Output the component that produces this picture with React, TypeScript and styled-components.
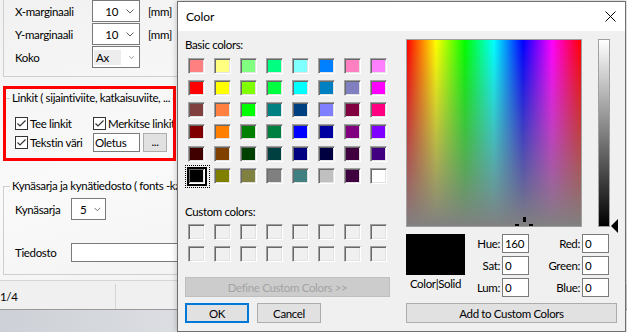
import React from 'react';
import styled, { createGlobalStyle } from 'styled-components';

const Global = createGlobalStyle`
  html, body { margin: 0; padding: 0; }
  body {
    width: 627px; height: 332px; overflow: hidden;
    font-family: Lato, "Liberation Sans", sans-serif; font-size: 11.5px; letter-spacing: -0.35px; color: #000;
    background: #f0f0f0;
  }
  * { box-sizing: border-box; }
`;

const Screen = styled.div`
  position: relative; width: 627px; height: 332px; overflow: hidden;
  display: flex; flex-direction: column;
`;

const AppWindow = styled.div`
  flex: 0 0 310px; display: flex; flex-direction: column;
  border-bottom: 1px solid #9a9a9a;
`;

const Content = styled.div`
  flex: 0 0 280px; display: flex; flex-direction: column;
  background: linear-gradient(165deg, #f1f1f1 0%, #fafafa 45%, #f3f3f3 75%, #ededed 100%);
`;

const TopGroup = styled.div`
  height: 77px; margin-left: 3px; width: 400px;
  border-left: 1px solid #cfcfcf; border-bottom: 1px solid #cfcfcf;
  padding-left: 11px; display: flex; flex-direction: column; gap: 1px;
`;

const FormRow = styled.div<{ $h?: number }>`
  height: ${p => p.$h ?? 22}px; display: flex; align-items: center;
`;

const FieldLabel = styled.span<{ $w: number }>`
  width: ${p => p.$w}px; flex: 0 0 auto; white-space: nowrap;
`;

const Combo = styled.div<{ $w: number; $pl: number; $pr: number }>`
  width: ${p => p.$w}px; height: 22px; background: #fff; border: 1px solid #7a7a7a;
  display: flex; align-items: center; padding: 0 ${p => p.$pr}px 0 ${p => p.$pl}px; gap: 8px;
`;

const ComboValue = styled.span<{ $right?: boolean; $hl?: boolean }>`
  flex: ${p => (p.$right ? 1 : '0 0 auto')}; text-align: ${p => (p.$right ? 'right' : 'left')};
  ${p => (p.$hl ? 'background:#ededed; padding: 1px 12px 1px 2px; flex:1;' : '')}
`;

const Unit = styled.span`
  margin-left: 8px;
`;

const Highlight = styled.div`
  margin: 9px 0 0 3px; width: 173px; height: 75px;
  border: 3px solid #ff0000; overflow: hidden;
`;

const GroupBox = styled.fieldset<{ $left?: boolean; $bottom?: boolean }>`
  margin: 0; min-width: 0; padding: 0;
  border: none; border-top: 1px solid #cfcfcf;
  ${p => (p.$left ? 'border-left: 1px solid #cfcfcf;' : '')}
  ${p => (p.$bottom ? 'border-bottom: 1px solid #cfcfcf;' : '')}
`;

const Legend = styled.legend<{ $ml: number }>`
  padding: 0 2px; margin-left: ${p => p.$ml}px; line-height: 14px; white-space: nowrap;
`;

const LinksGroup = styled(GroupBox)`
  margin-top: 2px; width: 300px;
`;

const CheckGrid = styled.div`
  display: grid; grid-template-columns: 78px auto; grid-template-rows: 18px 19px;
  row-gap: 1px; padding: 9px 0 0 9px; align-items: center;
`;

const CheckItem = styled.label`
  display: flex; align-items: center; gap: 2px; white-space: nowrap;
`;

const CheckBox = styled.span`
  width: 13px; height: 13px; border: 1px solid #333; background: #fff;
  display: inline-flex; align-items: center; justify-content: center; flex: 0 0 auto;
`;

const ColorPick = styled.div`
  display: flex; gap: 3px; align-items: center;
`;

const TextBox = styled.div<{ $w: number; $h?: number }>`
  width: ${p => p.$w}px; height: ${p => p.$h ?? 19}px; background: #fff; border: 1px solid #7a7a7a;
  display: flex; align-items: center; padding-left: 1px; white-space: nowrap;
`;

const SmallButton = styled.div`
  width: 24px; height: 19px; background: #e1e1e1; border: 1px solid #adadad;
  display: flex; align-items: center; justify-content: center; padding-bottom: 2px;
`;

const PenGroup = styled(GroupBox)`
  margin: 18px 0 0 3px; width: 400px;
`;

const PenBody = styled.div`
  display: flex; flex-direction: column; gap: 23px; padding: 5px 0 12px 11px;
`;

const StatusBar = styled.div`
  flex: 1; background: #f0f0f0; border-top: 1px solid #d5d5d5; display: flex;
`;

const StatusCell = styled.div<{ $w?: number }>`
  width: ${p => (p.$w ? `${p.$w}px` : 'auto')}; flex: ${p => (p.$w ? '0 0 auto' : 1)};
  display: flex; align-items: center; padding-bottom: 1px;
  border-right: 1px solid #d5d5d5; margin: 3px 0 0;
`;

const Desktop = styled.div`
  flex: 1;
  background: linear-gradient(90deg, #cdd0d6 0%, #dfe1e5 35%, #eeeff1 70%, #f6f6f7 100%);
`;

/* ---------- Color dialog ---------- */

const Dialog = styled.div`
  position: absolute; left: 177px; top: 1px; width: 449px; height: 331px;
  border: 1px solid #707070; background: #f0f0f0;
  display: flex; flex-direction: column;
  box-shadow: 0 0 6px rgba(0, 0, 0, 0.25);
`;

const TitleBar = styled.div`
  height: 29px; background: #fff; display: flex; align-items: center;
  justify-content: space-between; padding-left: 8px; flex: 0 0 auto;
`;

const Title = styled.span`
  font-size: 12px; letter-spacing: -0.1px;
`;

const CloseBox = styled.div`
  width: 30px; height: 29px; display: flex; align-items: center; justify-content: center;
`;

const DialogBody = styled.div`
  display: flex; padding-left: 7px; gap: 16px;
`;

const LeftCol = styled.div`
  width: 205px; display: flex; flex-direction: column; padding-top: 7px;
`;

const SectionLabel = styled.div<{ $mt?: number }>`
  height: 14px; line-height: 14px; margin-top: ${p => p.$mt ?? 0}px;
`;

const SwatchGrid = styled.div<{ $mt: number }>`
  display: grid; grid-template-columns: repeat(8, 17px); grid-auto-rows: 16px;
  column-gap: 9px; row-gap: 6px; margin: ${p => p.$mt}px 0 0 3px;
`;

const Swatch = styled.div<{ $c: string; $sel?: boolean }>`
  position: relative; width: 17px; height: 16px; background: ${p => p.$c};
  border: 1px solid; border-color: #a0a0a0 #ffffff #ffffff #a0a0a0;
  box-shadow: inset 1px 1px 0 #696969, inset -1px -1px 0 #e3e3e3;
  ${p =>
    p.$sel
      ? `
    &::before { content: ''; position: absolute; inset: -2px -3px -3px -2px; border: 2px solid #000; }
    &::after { content: ''; position: absolute; inset: -4px -6px -5px -4px; border: 1px dotted #000; }
  `
      : ''}
`;

const Button = styled.div<{ $w: number; $primary?: boolean; $disabled?: boolean }>`
  width: ${p => p.$w}px; height: 20px; display: flex; align-items: center; justify-content: center;
  background: ${p => (p.$disabled ? '#cccccc' : '#e1e1e1')};
  color: ${p => (p.$disabled ? '#a3a3a3' : '#000')};
  border: ${p => (p.$primary ? '2px solid #0078d7' : p.$disabled ? '1px solid #bfbfbf' : '1px solid #adadad')};
  white-space: nowrap;
`;

const DefineButton = styled(Button)`
  margin-top: 15px;
`;

const ButtonRow = styled.div`
  display: flex; gap: 8px; margin-top: 6px;
`;

const RightCol = styled.div`
  width: 213px; display: flex; flex-direction: column; padding-top: 8px;
`;

const PickerRow = styled.div`
  display: flex; gap: 16px; height: 188px;
`;

const Spectrum = styled.div`
  position: relative; width: 176px; height: 188px; border: 1px solid #a0a0a0; overflow: hidden;
  background:
    linear-gradient(to bottom, rgba(128, 128, 128, 0) 0%, #808080 100%),
    linear-gradient(to right, #ff0000 0%, #ffff00 16.67%, #00ff00 33.33%, #00ffff 50%, #0000ff 66.67%, #ff00ff 83.33%, #ff0000 100%);
`;

const Crosshair = styled.svg`
  position: absolute; left: 107px; top: 176px;
`;

const LumWrap = styled.div`
  position: relative; width: 12px; height: 188px;
`;

const LumBar = styled.div`
  width: 12px; height: 188px; border: 1px solid #a0a0a0;
  background: linear-gradient(to bottom, #ffffff 0%, #808080 50%, #000000 100%);
`;

const LumArrow = styled.svg`
  position: absolute; left: 13px; top: 180px;
`;

const ValueRow = styled.div`
  display: flex; margin-top: 7px;
`;

const PreviewCol = styled.div`
  width: 61px; display: flex; flex-direction: column; align-items: center;
`;

const Preview = styled.div`
  width: 59px; height: 41px; background: #000; align-self: flex-start;
`;

const PreviewLabel = styled.div`
  margin-top: 2px; line-height: 14px; margin-left: -2px;
`;

const FieldsGrid = styled.div`
  display: grid; grid-template-columns: 33px 27px 49px 27px; grid-auto-rows: 19px;
  column-gap: 2px; row-gap: 3px; align-items: center;
`;

const ValueLabel = styled.span`
  text-align: right;
`;

const ValueInput = styled.div`
  height: 19px; background: #fff; border: 1px solid #7a7a7a; padding-left: 2px;
  display: flex; align-items: center;
`;

const AddButton = styled(Button)`
  margin-top: 6px;
`;

const basic = [
  ['#FF8080', '#FFFF80', '#80FF80', '#00FF80', '#80FFFF', '#0080FF', '#FF80C0', '#FF80FF'],
  ['#FF0000', '#FFFF00', '#80FF00', '#00FF40', '#00FFFF', '#0080C0', '#8080C0', '#FF00FF'],
  ['#804040', '#FF8040', '#00FF00', '#008080', '#004080', '#8080FF', '#800040', '#FF0080'],
  ['#800000', '#FF8000', '#008000', '#008040', '#0000FF', '#0000A0', '#800080', '#8000FF'],
  ['#400000', '#804000', '#004000', '#004040', '#000080', '#000040', '#400040', '#400080'],
  ['#000000', '#808000', '#808040', '#808080', '#408080', '#C0C0C0', '#400040', '#FFFFFF'],
];

const Chevron = () => (
  <svg width="8" height="5" viewBox="0 0 8 5">
    <polyline points="0.5,0.5 4,4 7.5,0.5" fill="none" stroke="#606060" strokeWidth="1" />
  </svg>
);

const Check = () => (
  <svg width="11" height="11" viewBox="0 0 11 11">
    <polyline points="1.5,5.5 4,8 9.5,2.5" fill="none" stroke="#333" strokeWidth="1.2" />
  </svg>
);

const CheckField = ({ label }: { label: string }) => (
  <CheckItem>
    <CheckBox>
      <Check />
    </CheckBox>
    {label}
  </CheckItem>
);

export default function App() {
  return (
    <>
      <Global />
      <Screen>
        <AppWindow>
          <Content>
            <TopGroup>
              <FormRow>
                <FieldLabel $w={77}>X-marginaali</FieldLabel>
                <Combo $w={48} $pl={3} $pr={5}>
                  <ComboValue $right>10</ComboValue>
                  <Chevron />
                </Combo>
                <Unit>[mm]</Unit>
              </FormRow>
              <FormRow>
                <FieldLabel $w={77}>Y-marginaali</FieldLabel>
                <Combo $w={48} $pl={3} $pr={5}>
                  <ComboValue $right>10</ComboValue>
                  <Chevron />
                </Combo>
                <Unit>[mm]</Unit>
              </FormRow>
              <FormRow>
                <FieldLabel $w={77}>Koko</FieldLabel>
                <Combo $w={48} $pl={1} $pr={5}>
                  <ComboValue $hl>Ax</ComboValue>
                  <Chevron />
                </Combo>
              </FormRow>
            </TopGroup>

            <Highlight>
              <LinksGroup>
                <Legend $ml={4}>Linkit ( sijaintiviite, katkaisuviite, ...</Legend>
                <CheckGrid>
                  <CheckField label="Tee linkit" />
                  <CheckField label="Merkitse linkit" />
                  <CheckField label="Tekstin väri" />
                  <ColorPick>
                    <TextBox $w={47}>Oletus</TextBox>
                    <SmallButton>...</SmallButton>
                  </ColorPick>
                </CheckGrid>
              </LinksGroup>
            </Highlight>

            <PenGroup $left $bottom>
              <Legend $ml={6}>Kynäsarja ja kynätiedosto ( fonts -kansio )</Legend>
              <PenBody>
                <FormRow>
                  <FieldLabel $w={56}>Kynäsarja</FieldLabel>
                  <Combo $w={35} $pl={8} $pr={4}>
                    <ComboValue>5</ComboValue>
                    <Chevron />
                  </Combo>
                </FormRow>
                <FormRow $h={19}>
                  <FieldLabel $w={56}>Tiedosto</FieldLabel>
                  <TextBox $w={250} />
                </FormRow>
              </PenBody>
            </PenGroup>
          </Content>
          <StatusBar>
            <StatusCell $w={116}>1/4</StatusCell>
            <StatusCell />
          </StatusBar>
        </AppWindow>
        <Desktop />

        <Dialog>
          <TitleBar>
            <Title>Color</Title>
            <CloseBox>
              <svg width="11" height="11" viewBox="0 0 11 11">
                <path d="M0.5 0.5 L10.5 10.5 M10.5 0.5 L0.5 10.5" stroke="#000" strokeWidth="1" />
              </svg>
            </CloseBox>
          </TitleBar>
          <DialogBody>
            <LeftCol>
              <SectionLabel>Basic colors:</SectionLabel>
              <SwatchGrid $mt={6}>
                {basic.flatMap((row, r) =>
                  row.map((c, i) => <Swatch key={`${r}-${i}`} $c={c} $sel={r === 5 && i === 0} />)
                )}
              </SwatchGrid>
              <SectionLabel $mt={21}>Custom colors:</SectionLabel>
              <SwatchGrid $mt={5}>
                {Array.from({ length: 16 }, (_, i) => (
                  <Swatch key={i} $c="#f0f0f0" />
                ))}
              </SwatchGrid>
              <DefineButton $w={205} $disabled>
                Define Custom Colors &gt;&gt;
              </DefineButton>
              <ButtonRow>
                <Button $w={64} $primary>OK</Button>
                <Button $w={64}>Cancel</Button>
              </ButtonRow>
            </LeftCol>
            <RightCol>
              <PickerRow>
                <Spectrum>
                  <Crosshair width="20" height="14" viewBox="0 0 20 14">
                    <rect x="9" y="1" width="3" height="5" fill="#000" />
                    <rect x="1" y="8" width="4" height="3" fill="#000" />
                    <rect x="15" y="8" width="4" height="3" fill="#000" />
                  </Crosshair>
                </Spectrum>
                <LumWrap>
                  <LumBar />
                  <LumArrow width="8" height="14" viewBox="0 0 8 14">
                    <polygon points="0,7 7,0 7,14" fill="#000" />
                  </LumArrow>
                </LumWrap>
              </PickerRow>
              <ValueRow>
                <PreviewCol>
                  <Preview />
                  <PreviewLabel>Color|Solid</PreviewLabel>
                </PreviewCol>
                <FieldsGrid>
                  <ValueLabel>Hue:</ValueLabel>
                  <ValueInput>160</ValueInput>
                  <ValueLabel>Red:</ValueLabel>
                  <ValueInput>0</ValueInput>
                  <ValueLabel>Sat:</ValueLabel>
                  <ValueInput>0</ValueInput>
                  <ValueLabel>Green:</ValueLabel>
                  <ValueInput>0</ValueInput>
                  <ValueLabel>Lum:</ValueLabel>
                  <ValueInput>0</ValueInput>
                  <ValueLabel>Blue:</ValueLabel>
                  <ValueInput>0</ValueInput>
                </FieldsGrid>
              </ValueRow>
              <AddButton $w={211}>Add to Custom Colors</AddButton>
            </RightCol>
          </DialogBody>
        </Dialog>
      </Screen>
    </>
  );
}
